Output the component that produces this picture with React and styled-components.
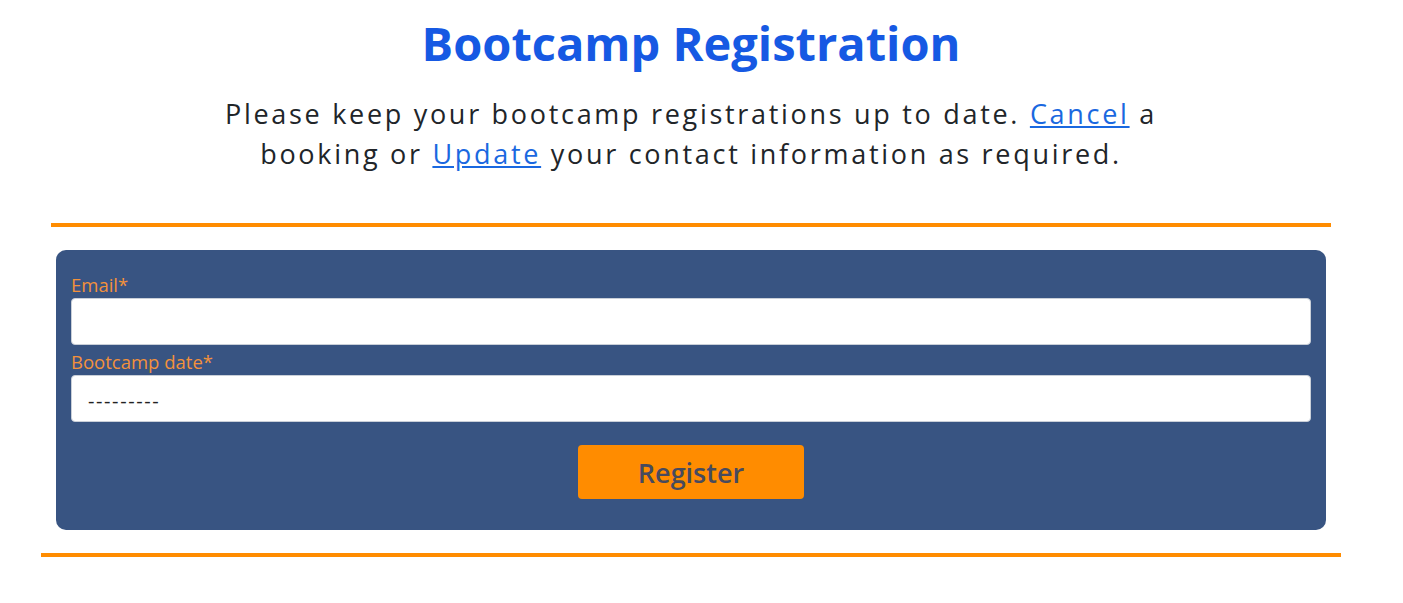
import styled, { createGlobalStyle } from "styled-components"

const GlobalStyle = createGlobalStyle`
  body {
    margin: 0;
    background: #ffffff;
    font-family: "Open Sans", "Noto Sans", sans-serif;
  }
`

const Page = styled.div`
  width: 1382px;
  display: flex;
  flex-direction: column;
  align-items: center;
  padding-top: 11px;
`

const Title = styled.h1`
  margin: 0;
  font-size: 47px;
  line-height: 64px;
  font-weight: 700;
  color: #1659e3;
`

const Intro = styled.p`
  margin: 19px 0 0;
  width: 980px;
  text-align: center;
  font-size: 27px;
  line-height: 40px;
  letter-spacing: 2.7px;
  color: #212529;
`

const Link = styled.a`
  color: #1a68e0;
  text-decoration: underline;
`

const Rule = styled.hr`
  margin: ${props => props.top || 0}px 0 0;
  border: 0;
  height: 4px;
  width: ${props => props.width}px;
  background: #ff8c00;
`

const Panel = styled.form`
  width: 1270px;
  box-sizing: border-box;
  margin: 23px 0 23px;
  padding: 22px 15px 31px;
  background: #385482;
  border-radius: 10px;
  display: flex;
  flex-direction: column;
`

const Label = styled.label`
  font-size: 18.5px;
  line-height: 26px;
  color: #f3913b;
`

const Input = styled.div`
  height: 47px;
  box-sizing: border-box;
  background: #ffffff;
  border: 1px solid #c9cfd8;
  border-radius: 4px;
  margin-bottom: 4px;
  display: flex;
  align-items: center;
  padding: 4px 0 0 16px;
  font-size: 20px;
  letter-spacing: 1.6px;
  color: #222;
`

const Button = styled.button`
  align-self: center;
  margin-top: 19px;
  width: 226px;
  height: 54px;
  border: 0;
  border-radius: 4px;
  background: #ff8c00;
  color: #474a5e;
  font-family: "Open Sans", "Noto Sans", sans-serif;
  font-size: 27px;
  font-weight: 600;
`

export default function App() {
  return (
    <>
      <GlobalStyle />
      <Page>
        <Title>Bootcamp Registration</Title>
        <Intro>
          Please keep your bootcamp registrations up to date. <Link href="#">Cancel</Link> a
          booking or <Link href="#">Update</Link> your contact information as required.
        </Intro>
        <Rule width={1280} top={49} />
        <Panel>
          <Label>Email*</Label>
          <Input />
          <Label>Bootcamp date*</Label>
          <Input>---------</Input>
          <Button type="button">Register</Button>
        </Panel>
        <Rule width={1300} />
      </Page>
    </>
  )
}
